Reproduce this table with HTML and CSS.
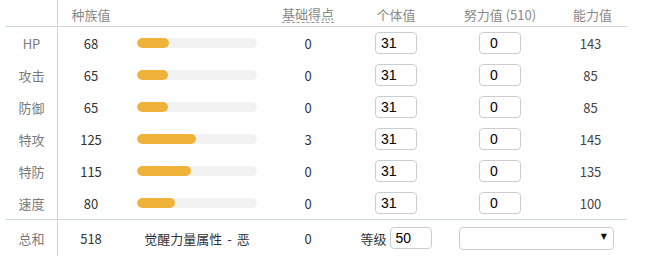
FILE: index.html
```html
<!DOCTYPE html>
<html lang="zh">
<head>
<meta charset="utf-8">
<link rel="stylesheet" href="styles.css">
</head>
<body>
<div class="stats">
  <div class="row head">
    <div class="c lbl"></div>
    <div class="c base">种族值</div>
    <div class="c bar"></div>
    <div class="c pts"><span class="dash">基础得点</span></div>
    <div class="c iv">个体值</div>
    <div class="c ev">努力值 (510)</div>
    <div class="c hval">能力值</div>
  </div>

  <div class="row">
    <div class="c lbl">HP</div>
    <div class="c base num">68</div>
    <div class="c bar"><div class="track"><div class="fill" style="width:32px"></div></div></div>
    <div class="c pts num">0</div>
    <div class="c iv"><input class="box" value="31"></div>
    <div class="c ev"><input class="box evbox" value="0"></div>
    <div class="c val num">143</div>
  </div>
  <div class="row">
    <div class="c lbl">攻击</div>
    <div class="c base num">65</div>
    <div class="c bar"><div class="track"><div class="fill" style="width:30.6px"></div></div></div>
    <div class="c pts num">0</div>
    <div class="c iv"><input class="box" value="31"></div>
    <div class="c ev"><input class="box evbox" value="0"></div>
    <div class="c val num">85</div>
  </div>
  <div class="row">
    <div class="c lbl">防御</div>
    <div class="c base num">65</div>
    <div class="c bar"><div class="track"><div class="fill" style="width:30.6px"></div></div></div>
    <div class="c pts num">0</div>
    <div class="c iv"><input class="box" value="31"></div>
    <div class="c ev"><input class="box evbox" value="0"></div>
    <div class="c val num">85</div>
  </div>
  <div class="row">
    <div class="c lbl">特攻</div>
    <div class="c base num">125</div>
    <div class="c bar"><div class="track"><div class="fill" style="width:58.8px"></div></div></div>
    <div class="c pts num">3</div>
    <div class="c iv"><input class="box" value="31"></div>
    <div class="c ev"><input class="box evbox" value="0"></div>
    <div class="c val num">145</div>
  </div>
  <div class="row">
    <div class="c lbl">特防</div>
    <div class="c base num">115</div>
    <div class="c bar"><div class="track"><div class="fill" style="width:54.1px"></div></div></div>
    <div class="c pts num">0</div>
    <div class="c iv"><input class="box" value="31"></div>
    <div class="c ev"><input class="box evbox" value="0"></div>
    <div class="c val num">135</div>
  </div>
  <div class="row">
    <div class="c lbl">速度</div>
    <div class="c base num">80</div>
    <div class="c bar"><div class="track"><div class="fill" style="width:37.6px"></div></div></div>
    <div class="c pts num">0</div>
    <div class="c iv"><input class="box" value="31"></div>
    <div class="c ev"><input class="box evbox" value="0"></div>
    <div class="c val num">100</div>
  </div>

  <div class="row foot">
    <div class="c lbl">总和</div>
    <div class="c base num">518</div>
    <div class="c hp num">觉醒力量属性<span class="sep">-</span>恶</div>
    <div class="c pts num">0</div>
    <div class="c iv level"><span class="lv">等级</span><input class="box" value="50"></div>
    <div class="c sel"><span class="selwrap"><select class="select"><option></option></select></span></div>
  </div>
</div>
</body>
</html>
```

FILE: styles.css
```css
html, body {
  margin: 0;
  padding: 0;
  background: #fff;
}
body {
  font-family: "Noto Sans CJK SC", "Noto Sans", sans-serif;
  font-size: 13px;
  color: #333;
}
.stats {
  margin-left: 6px;
  width: 621px;
  height: 256px;
  display: flex;
  flex-direction: column;
}
.row {
  display: grid;
  grid-template-columns: 52px 66px 146px 76px 100px 108px 73px;
  height: 32px;
  align-items: stretch;
}
.row.head {
  height: 26px;
  border-bottom: 1px solid #cfd5de;
  color: #888;
}
.row.foot {
  flex: 1;
  height: auto;
  border-top: 1px solid #cfd5de;
  grid-template-columns: 52px 66px 146px 76px 100px 181px;
}
.c {
  display: flex;
  align-items: center;
  justify-content: center;
  white-space: nowrap;
}
.head .c {
  padding-top: 2px;
  color: #888;
}
.hval { padding-left: 4px; }
.lbl {
  border-right: 1px solid #cfd5de;
  color: #7b7b7b;
}
.num { color: #333; }
.val { color: #444; }
.sep { padding: 0 5px; }
.dash {
  border-bottom: 1px dashed #999;
  line-height: 17px;
}
.bar {
  justify-content: flex-start;
  padding-left: 13px;
}
.track {
  width: 120px;
  height: 10px;
  border-radius: 5px;
  background: #f2f2f2;
  overflow: hidden;
}
.fill {
  height: 100%;
  border-radius: 5px;
  background: #efb33c;
}
.box {
  box-sizing: border-box;
  width: 42px;
  height: 22px;
  border: 1px solid #ccc;
  border-radius: 4px;
  padding: 0 5px;
  font-family: "Liberation Sans", Arial, sans-serif;
  font-size: 14px;
  color: #000;
  outline: none;
  margin: 0;
}
.evbox { padding-left: 10px; }
.level { gap: 3px; }
.lv { color: #333; }
.sel {
  justify-content: flex-start;
  padding-left: 13px;
}
.selwrap {
  position: relative;
  display: block;
}
.select {
  display: block;
  appearance: none;
  -webkit-appearance: none;
  box-sizing: border-box;
  width: 155px;
  height: 23px;
  border: 1px solid #ccc;
  border-radius: 4px;
  background: #fff;
  margin: 0;
}
.selwrap::after {
  content: "▼";
  position: absolute;
  right: 7px;
  top: 5px;
  font-family: "DejaVu Sans", sans-serif;
  font-size: 8px;
  color: #111;
  pointer-events: none;
}
```
